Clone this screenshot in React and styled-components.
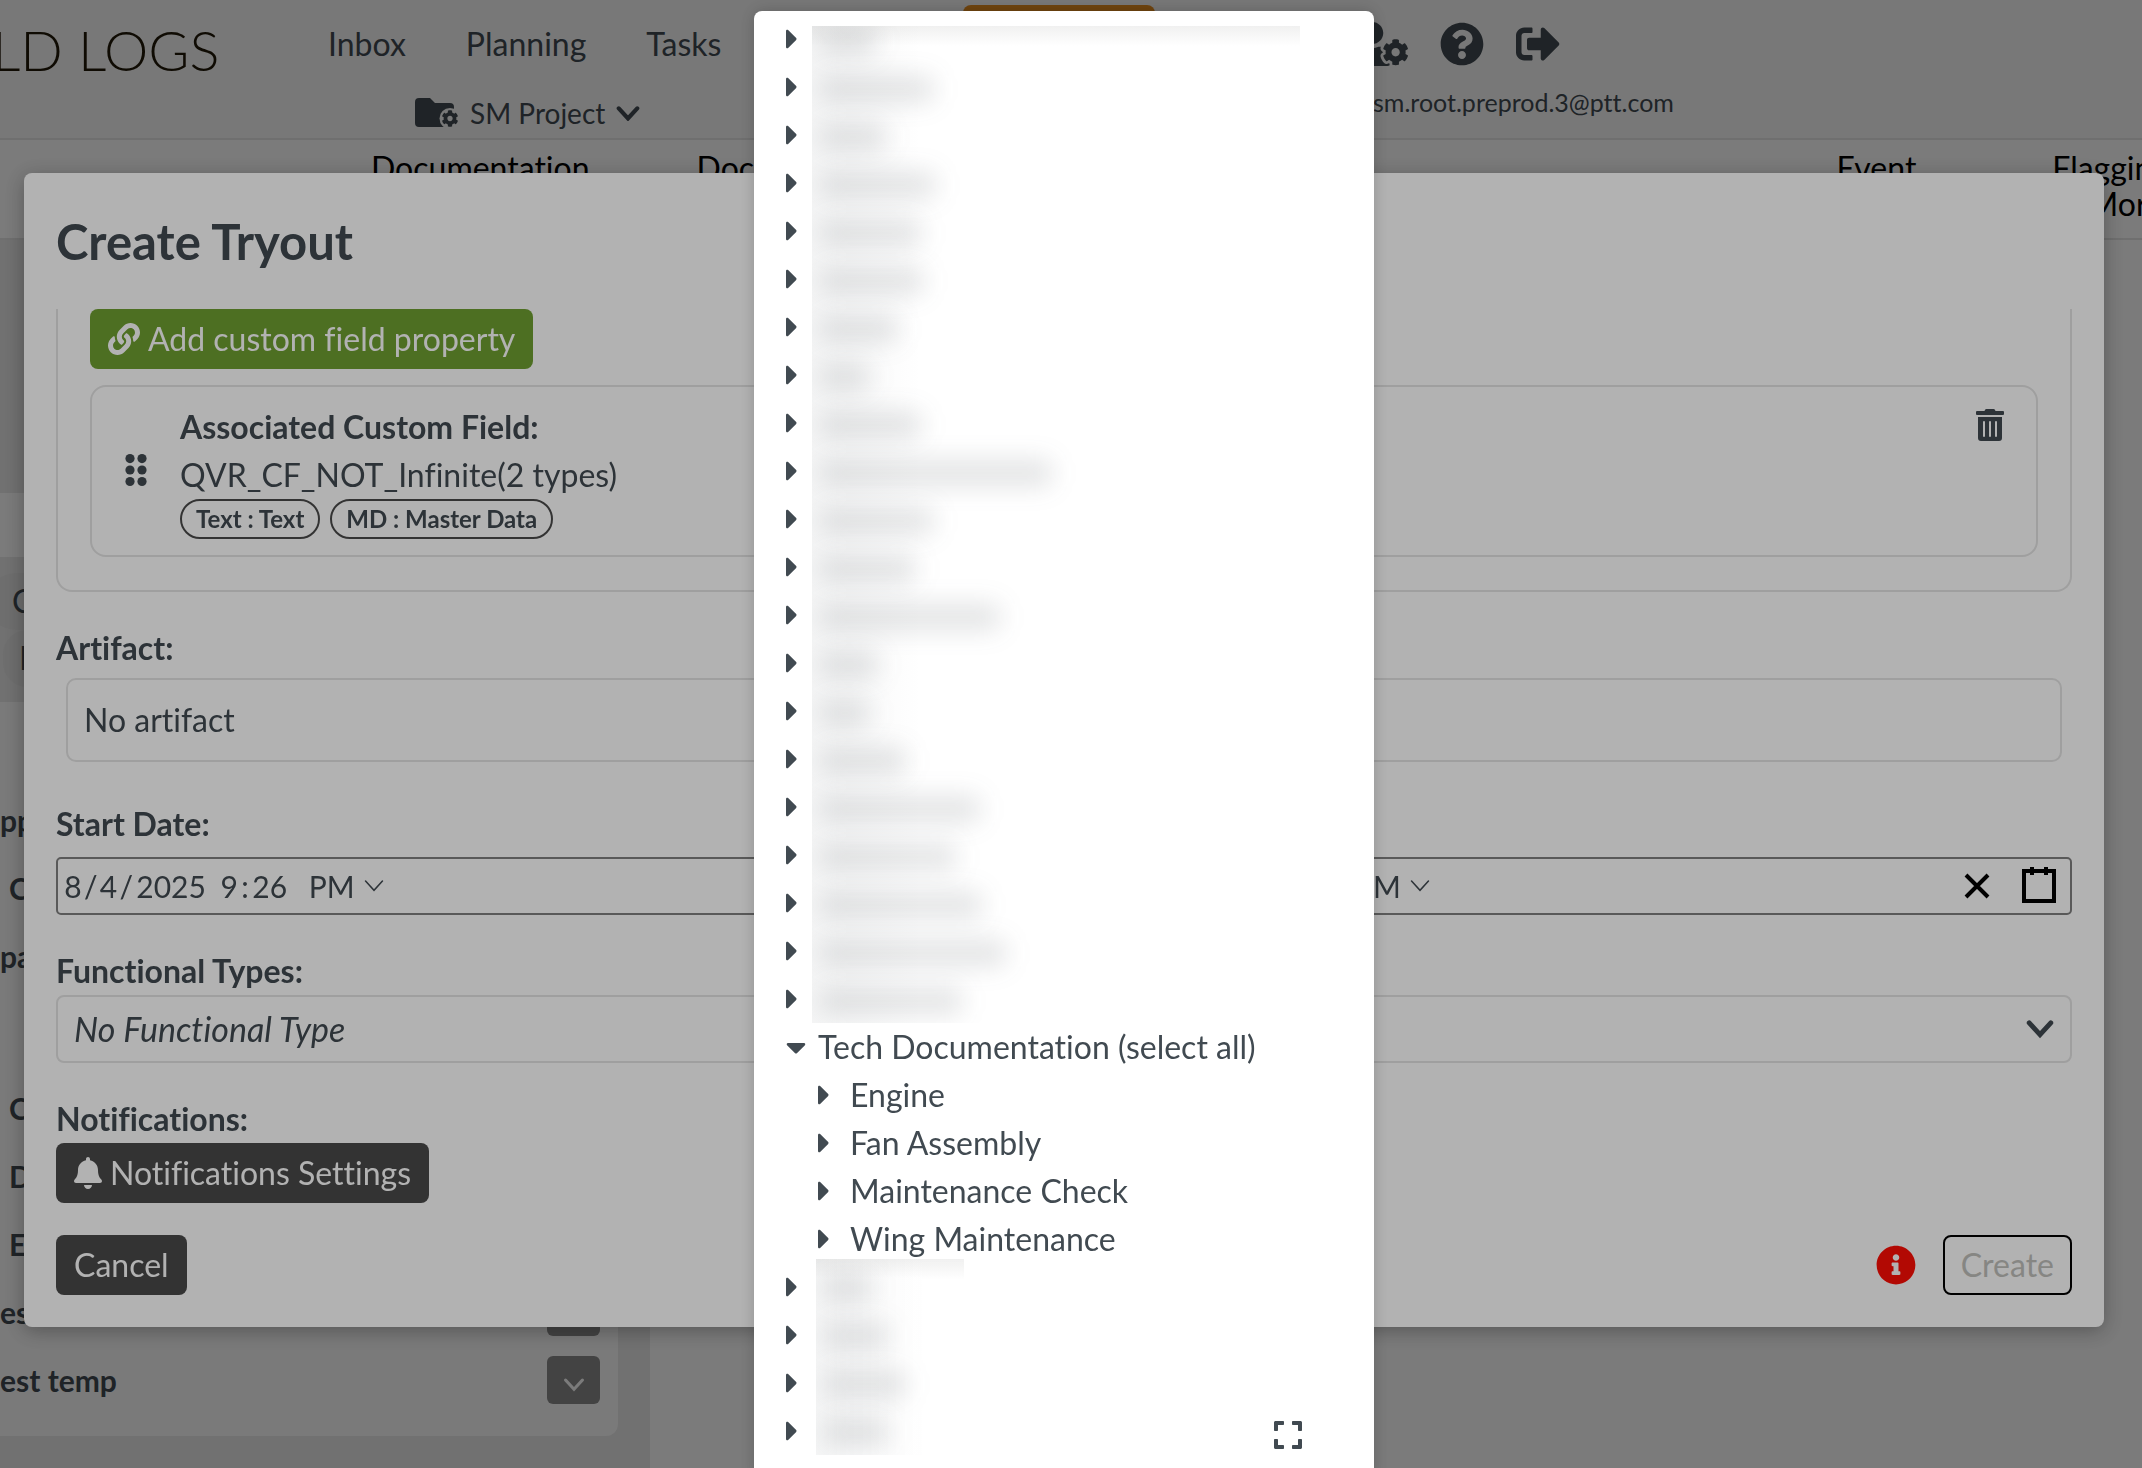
import React from "react"
import styled, { createGlobalStyle } from "styled-components"
import {
    FaBell, FaCaretDown, FaCaretRight, FaCog, FaExpand, FaInfoCircle, FaLink,
    FaQuestionCircle, FaSignOutAlt, FaTrashAlt, FaUserCog
} from "react-icons/fa"

const GlobalStyle = createGlobalStyle`
* {
box-sizing: border-box;
}

body {
margin: 0;
overflow: hidden;
background: #fdfdfd;
color: #414a51;
font-family: Lato, "Liberation Sans", sans-serif;
font-size: 32px;
line-height: 48px;
font-variant-ligatures: none;
}

button, input, select {
font: inherit;
color: inherit;
}
`;

/* page behind the dialogs */

const Page = styled.div`
height: 100vh;
overflow: hidden;
`;

const Header = styled.header`
display: flex;
height: 140px;
background: #f7f7f7;
border-bottom: 2px solid #e4e4e4;
`;

const Logo = styled.div`
width: 336px;
margin-left: -8px;
padding-top: 12px;
font-size: 56px;
font-weight: 300;
line-height: 76px;
color: #201808;
white-space: nowrap;
`;

const NavColumn = styled.div`
display: flex;
flex-direction: column;
width: 1025px;
`;

const NavRow = styled.nav`
display: flex;
gap: 60px;
height: 68px;
padding-top: 20px;
`;

const NavLink = styled.a`
color: inherit;
text-decoration: none;
`;

const OrangeButton = styled.button`
width: 192px;
height: 72px;
margin: -15px 0 0 182px;
border: 0;
border-radius: 8px;
background: #e58d1f;
`;

const ProjectButton = styled.button`
display: flex;
align-items: center;
align-self: flex-start;
gap: 11px;
margin: 21px 0 0 87px;
padding: 0;
border: 0;
background: none;
font-size: 28px;
`;

const UserColumn = styled.div`
padding-top: 20px;
`;

const UserIcons = styled.div`
display: flex;
align-items: center;
gap: 32px;
height: 48px;

svg {
width: 44px;
height: 44px;
}

svg:first-child {
width: 55px;
}
`;

const Email = styled.div`
padding: 10px 0 0 20px;
font-size: 25px;
`;

const TabBar = styled.div`
display: flex;
justify-content: space-between;
height: 100px;
padding-top: 10px;
border-bottom: 2px solid #e4e4e4;
color: black;
line-height: 36px;
text-align: center;
white-space: nowrap;
`;

const TabGroup = styled.div`
display: flex;
gap: ${props => props.$gap};
padding-left: ${props => props.$start || "0"};
margin-right: ${props => props.$end || "0"};
`;

const SideBar = styled.aside`
width: 650px;
padding: 253px 0 400px;
background: #e8e8e8;
`;

const SideBand = styled.div`
height: 64px;
background: #fdfdfd;
`;

const ChipList = styled.div`
display: flex;
flex-direction: column;
align-items: flex-start;
height: 145px;
padding-top: 16px;
`;

const Chip = styled.div`
height: 57px;
padding: 4px 24px;
padding-left: ${props => props.$start};
margin-left: ${props => props.$inset};
border-radius: 28px;
background: #e2e2e2;
`;

const SideCard = styled.div`
width: 618px;
padding: 84px 0 22px;
border-radius: 0 0 12px 0;
background: #fbfbfb;
`;

const SideGroup = styled.div`
padding-bottom: ${props => props.$space || "0"};
`;

const SideRow = styled.div`
display: flex;
align-items: center;
justify-content: space-between;
height: 68px;
padding: 0 18px 0 ${props => props.$start};
font-size: 30px;
font-weight: 700;
`;

const SideButton = styled.button`
width: 53px;
height: 48px;
padding: 0;
border: 0;
border-radius: 6px;
background: #8c8c8c;
color: #fdfdfd;
`;

/* create dialog */

const Overlay = styled.div`
position: fixed;
inset: 0;
overflow: hidden;
padding: ${props => props.$top} 38px 0 24px;
background: rgba(0, 0, 0, 0.3);
`;

const Modal = styled.section`
display: flex;
flex-direction: column;
gap: 32px;
padding: 32px;
border-radius: 8px;
background: white;
box-shadow: 0 4px 20px rgba(0, 0, 0, 0.3);
`;

const Title = styled.h1`
margin: 0;
font-size: 49px;
line-height: 72px;
`;

const FieldGroup = styled.div`
padding: 0 32px 33px;
border: 2px solid #e4e4e4;
border-top: 0;
border-radius: 0 0 16px 16px;
`;

const Button = styled.button`
display: flex;
align-items: center;
gap: 8px;
height: 60px;
padding: 0 18px;
border: 0;
border-radius: 8px;
background: ${props => props.$green ? "#6fa032" : "#4a4a4a"};
color: white;

svg {
width: ${props => props.$icon || "32px"};
height: 32px;
}
`;

const CreateButton = styled(Button)`
padding: 0 16px;
border: 2px solid black;
background: white;
color: #c1c1bc;
`;

const PropertyCard = styled.div`
display: flex;
align-items: center;
margin-top: 16px;
padding: 16px 32px;
border: 2px solid #e4e4e4;
border-radius: 16px;
`;

const PropertyText = styled.div`
flex: 1;
padding-left: 33px;
`;

const Tags = styled.div`
display: flex;
gap: 10px;
`;

const Tag = styled.span`
height: 40px;
padding: 0 14px;
border: 2px solid #4a4a4a;
border-radius: 20px;
font-size: 24px;
font-weight: 700;
line-height: 36px;
`;

const IconButton = styled.button`
display: flex;
align-items: center;
justify-content: center;
align-self: ${props => props.$top ? "flex-start" : "center"};
width: ${props => props.$width || "28px"};
height: 44px;
padding: 0;
border: 0;
background: none;

svg {
flex: none;
}
`;

const Field = styled.div`
display: flex;
flex-direction: column;
align-items: stretch;
`;

const Label = styled.label`
font-weight: 700;
`;

const ArtifactBox = styled.output`
margin: 6px 10px;
padding: 16px;
border: 2px solid #e4e4e4;
border-radius: 10px;
`;

const DateBox = styled.div`
display: flex;
align-items: center;
height: 58px;
margin-top: 9px;
border: 2px solid #808080;
border-radius: 5px;
font-size: 30px;
`;

const DateGroup = styled.div`
display: flex;
align-items: center;
flex: ${props => props.$wide ? "0 0 52%" : "1"};
padding-left: 4px;
`;

const DatePart = styled.input`
width: ${props => props.$width};
height: 48px;
margin-right: ${props => props.$space || "0"};
padding: 0;
border: 0;
background: none;
text-align: center;
`;

const AmPm = styled.select`
appearance: none;
width: 54px;
height: 48px;
padding: 0;
border: 0;
background: none;
`;

const SelectWrap = styled.div`
display: grid;
align-items: center;

> * {
grid-area: 1 / 1;
}

> svg {
justify-self: end;
margin-right: 18px;
pointer-events: none;
}
`;

const Select = styled.select`
appearance: none;
height: 68px;
padding: 0 16px;
border: 2px solid #e4e4e4;
border-radius: 8px;
background: white;
font-size: 34px;
font-style: italic;
`;

const Footer = styled.footer`
display: flex;
align-items: center;
gap: 27px;
`;

const Alert = styled.span`
display: flex;
margin-left: auto;
color: #ff0d05;
font-size: 40px;
`;

/* tree popup */

const TreeDialog = styled.section`
width: 620px;
height: 100vh;
margin: 0 auto;
padding: 4px 32px 0;
border-radius: 8px;
background: white;
box-shadow: 0 0 16px rgba(0, 0, 0, 0.2);
`;

const TreeRow = styled.button`
display: flex;
align-items: center;
height: 48px;
padding: 0;
padding-left: ${props => props.$level ? "32px" : "0"};
border: 0;
background: none;
white-space: nowrap;
`;

const Caret = styled.span`
display: flex;
width: 32px;

svg {
width: ${props => props.$open ? "20px" : "12px"};
height: 32px;
}
`;

const HiddenGroup = styled.div`
display: flex;
`;

const CaretColumn = styled.div`
width: ${props => props.$width};
`;

const HiddenNames = styled.div`
overflow: hidden;
width: ${props => props.$width};
margin-top: ${props => props.$top};
padding-top: ${props => props.$space};
background:
linear-gradient(to bottom, rgba(70, 70, 65, 0.08), transparent 20px),
linear-gradient(to right, rgba(65, 74, 81, 0.05), transparent 110px);
`;

const HiddenName = styled.div`
height: 28px;
margin: 0 0 20px 8px;
border-radius: 8px;
background: rgba(65, 74, 81, 0.14);
filter: blur(12px);

&:last-child {
margin-bottom: 0;
}
`;

const ExpandButton = styled(IconButton)`
position: fixed;
bottom: 11px;
left: calc(50% + 203px);
`;

const hiddenBefore = [56, 114, 66, 116, 102, 104, 78, 50, 102, 232, 114, 96, 180, 58, 50, 86, 160, 136, 162, 186, 142]
const hiddenAfter = [48, 64, 82, 64]
const children = ["Engine", "Fan Assembly", "Maintenance Check", "Wing Maintenance"]

const Chevron = ({ width = 28, stroke = 5 }) => (
    <svg width={width} height={width * 0.7} viewBox="0 0 28 20" fill="none" stroke="currentColor" strokeWidth={stroke} strokeLinecap="round">
        <path d="M3 4 14 16 25 4" />
    </svg>
)

const FolderCog = () => (
    <svg width="44" height="30" viewBox="0 0 44 30">
        <path fill="currentColor" d="M4 0h11l5 5h15a4 4 0 0 1 4 4v16a4 4 0 0 1-4 4H4a4 4 0 0 1-4-4V4a4 4 0 0 1 4-4Z" />
        <circle cx="35" cy="20.500" r="10.500" fill="#f7f7f7" />
        <FaCog x="26.500" y="12" size={17} />
    </svg>
)

const Grip = () => (
    <svg width="23" height="34" viewBox="0 0 23 34" fill="currentColor">
        {[6, 18].map(x => [4.600, 16, 27.500].map(y => <circle key={x + "-" + y} cx={x} cy={y} r="4.600" />))}
    </svg>
)

const HiddenRows = ({ widths, column, ...rest }) => (
    <HiddenGroup>
        <CaretColumn $width={column}>
            {widths.map((w, i) => (
                <TreeRow key={i} aria-label="Expand">
                    <Caret><FaCaretRight /></Caret>
                </TreeRow>
            ))}
        </CaretColumn>
        <HiddenNames {...rest}>
            {widths.map((w, i) => <HiddenName key={i} style={{ width: w }} />)}
        </HiddenNames>
    </HiddenGroup>
)

const DateInputs = ({ name, wide }) => (
    <DateGroup $wide={wide}>
        <DatePart $width="22px" aria-label={name + " month"} defaultValue="8" />/
        <DatePart $width="22px" aria-label={name + " day"} defaultValue="4" />/
        <DatePart $width="76px" $space="8px" aria-label={name + " year"} defaultValue="2025" />
        <DatePart $width="24px" aria-label={name + " hour"} defaultValue="9" />:
        <DatePart $width="42px" $space="18px" aria-label={name + " minute"} defaultValue="26" />
        <AmPm aria-label={name + " AM/PM"} defaultValue="PM">
            <option>AM</option>
            <option>PM</option>
        </AmPm>
        <Chevron width={22} stroke={2} />
    </DateGroup>
)

const Background = () => (
    <Page>
        <Header>
            <Logo>LD LOGS</Logo>
            <NavColumn>
                <NavRow>
                    <NavLink href="#inbox">Inbox</NavLink>
                    <NavLink href="#planning">Planning</NavLink>
                    <NavLink href="#tasks">Tasks</NavLink>
                    <OrangeButton aria-label="Action" />
                </NavRow>
                <ProjectButton>
                    <FolderCog />
                    SM Project
                    <Chevron width={24} />
                </ProjectButton>
            </NavColumn>
            <UserColumn>
                <UserIcons>
                    <FaUserCog />
                    <FaQuestionCircle />
                    <FaSignOutAlt />
                </UserIcons>
                <Email>sm.root.preprod.3@ptt.com</Email>
            </UserColumn>
        </Header>
        <TabBar>
            <TabGroup $start="371px" $gap="107px">
                <span>Documentation</span>
                <span>Doc</span>
            </TabGroup>
            <TabGroup $gap="136px" $end="-58px">
                <span>Event</span>
                <span>Flagging &amp;<br />More</span>
            </TabGroup>
        </TabBar>
        <SideBar>
            <SideBand />
            <ChipList>
                <Chip $start="24px" $inset="-12px">C</Chip>
                <Chip $start="16px" $inset="3px">I</Chip>
            </ChipList>
            <SideCard>
                <SideGroup $space="84px">
                    <SideRow $start="0">pp</SideRow>
                    <SideRow $start="9px">C</SideRow>
                    <SideRow $start="0">pa</SideRow>
                </SideGroup>
                <SideGroup>
                    <SideRow $start="9px">C</SideRow>
                    <SideRow $start="9px">D</SideRow>
                    <SideRow $start="9px">E</SideRow>
                    <SideRow $start="0">es<SideButton aria-label="Open" /></SideRow>
                    <SideRow $start="0">
                        est temp
                        <SideButton aria-label="Open"><Chevron width={22} stroke={4} /></SideButton>
                    </SideRow>
                </SideGroup>
            </SideCard>
        </SideBar>
    </Page>
)

const CreateTryout = () => (
    <Modal role="dialog" aria-label="Create Tryout">
        <Title>Create Tryout</Title>
        <FieldGroup>
            <Button $green><FaLink />Add custom field property</Button>
            <PropertyCard>
                <Grip />
                <PropertyText>
                    <b>Associated Custom Field:</b>
                    <div>QVR_CF_NOT_Infinite(2 types)</div>
                    <Tags>
                        <Tag>Text : Text</Tag>
                        <Tag>MD : Master Data</Tag>
                    </Tags>
                </PropertyText>
                <IconButton $top aria-label="Delete"><FaTrashAlt size={32} /></IconButton>
            </PropertyCard>
        </FieldGroup>
        <Field>
            <Label htmlFor="artifact">Artifact:</Label>
            <ArtifactBox id="artifact">No artifact</ArtifactBox>
        </Field>
        <Field>
            <Label as="span">Start Date:</Label>
            <DateBox>
                <DateInputs name="Start" wide />
                <DateInputs name="End" />
                <IconButton $width="62px" aria-label="Clear">
                    <svg width="38" height="38" viewBox="0 0 19 19" stroke="black" strokeWidth="2">
                        <path d="M4 4 15 15M15 4 4 15" />
                    </svg>
                </IconButton>
                <IconButton $width="62px" aria-label="Calendar">
                    <svg width="38" height="38" viewBox="0 0 19 19" stroke="black" strokeWidth="2" fill="none">
                        <path d="M2 2h15v15H2zM6 0v4M13 0v4" />
                    </svg>
                </IconButton>
            </DateBox>
        </Field>
        <Field>
            <Label htmlFor="types">Functional Types:</Label>
            <SelectWrap>
                <Select id="types"><option>No Functional Type</option></Select>
                <Chevron />
            </SelectWrap>
        </Field>
        <div>
            <Label as="div">Notifications:</Label>
            <Button $icon="28px"><FaBell />Notifications Settings</Button>
        </div>
        <Footer>
            <Button>Cancel</Button>
            <Alert><FaInfoCircle /></Alert>
            <CreateButton disabled>Create</CreateButton>
        </Footer>
    </Modal>
)

const App = () => (
    <>
        <GlobalStyle />
        <Background />
        <Overlay $top="173px">
            <CreateTryout />
        </Overlay>
        <Overlay $top="11px">
            <TreeDialog role="dialog" aria-label="Documentation">
                <HiddenRows widths={hiddenBefore} column="26px" $width="488px" $top="11px" $space="1px" />
                <TreeRow>
                    <Caret $open><FaCaretDown /></Caret>
                    Tech Documentation (select all)
                </TreeRow>
                {children.map(name => (
                    <TreeRow key={name} $level={1}>
                        <Caret><FaCaretRight /></Caret>
                        {name}
                    </TreeRow>
                ))}
                <HiddenRows widths={hiddenAfter} column="30px" $width="148px" $top="-4px" $space="15px" />
                <ExpandButton aria-label="Expand"><FaExpand size={32} /></ExpandButton>
            </TreeDialog>
        </Overlay>
    </>
)

export default App;
